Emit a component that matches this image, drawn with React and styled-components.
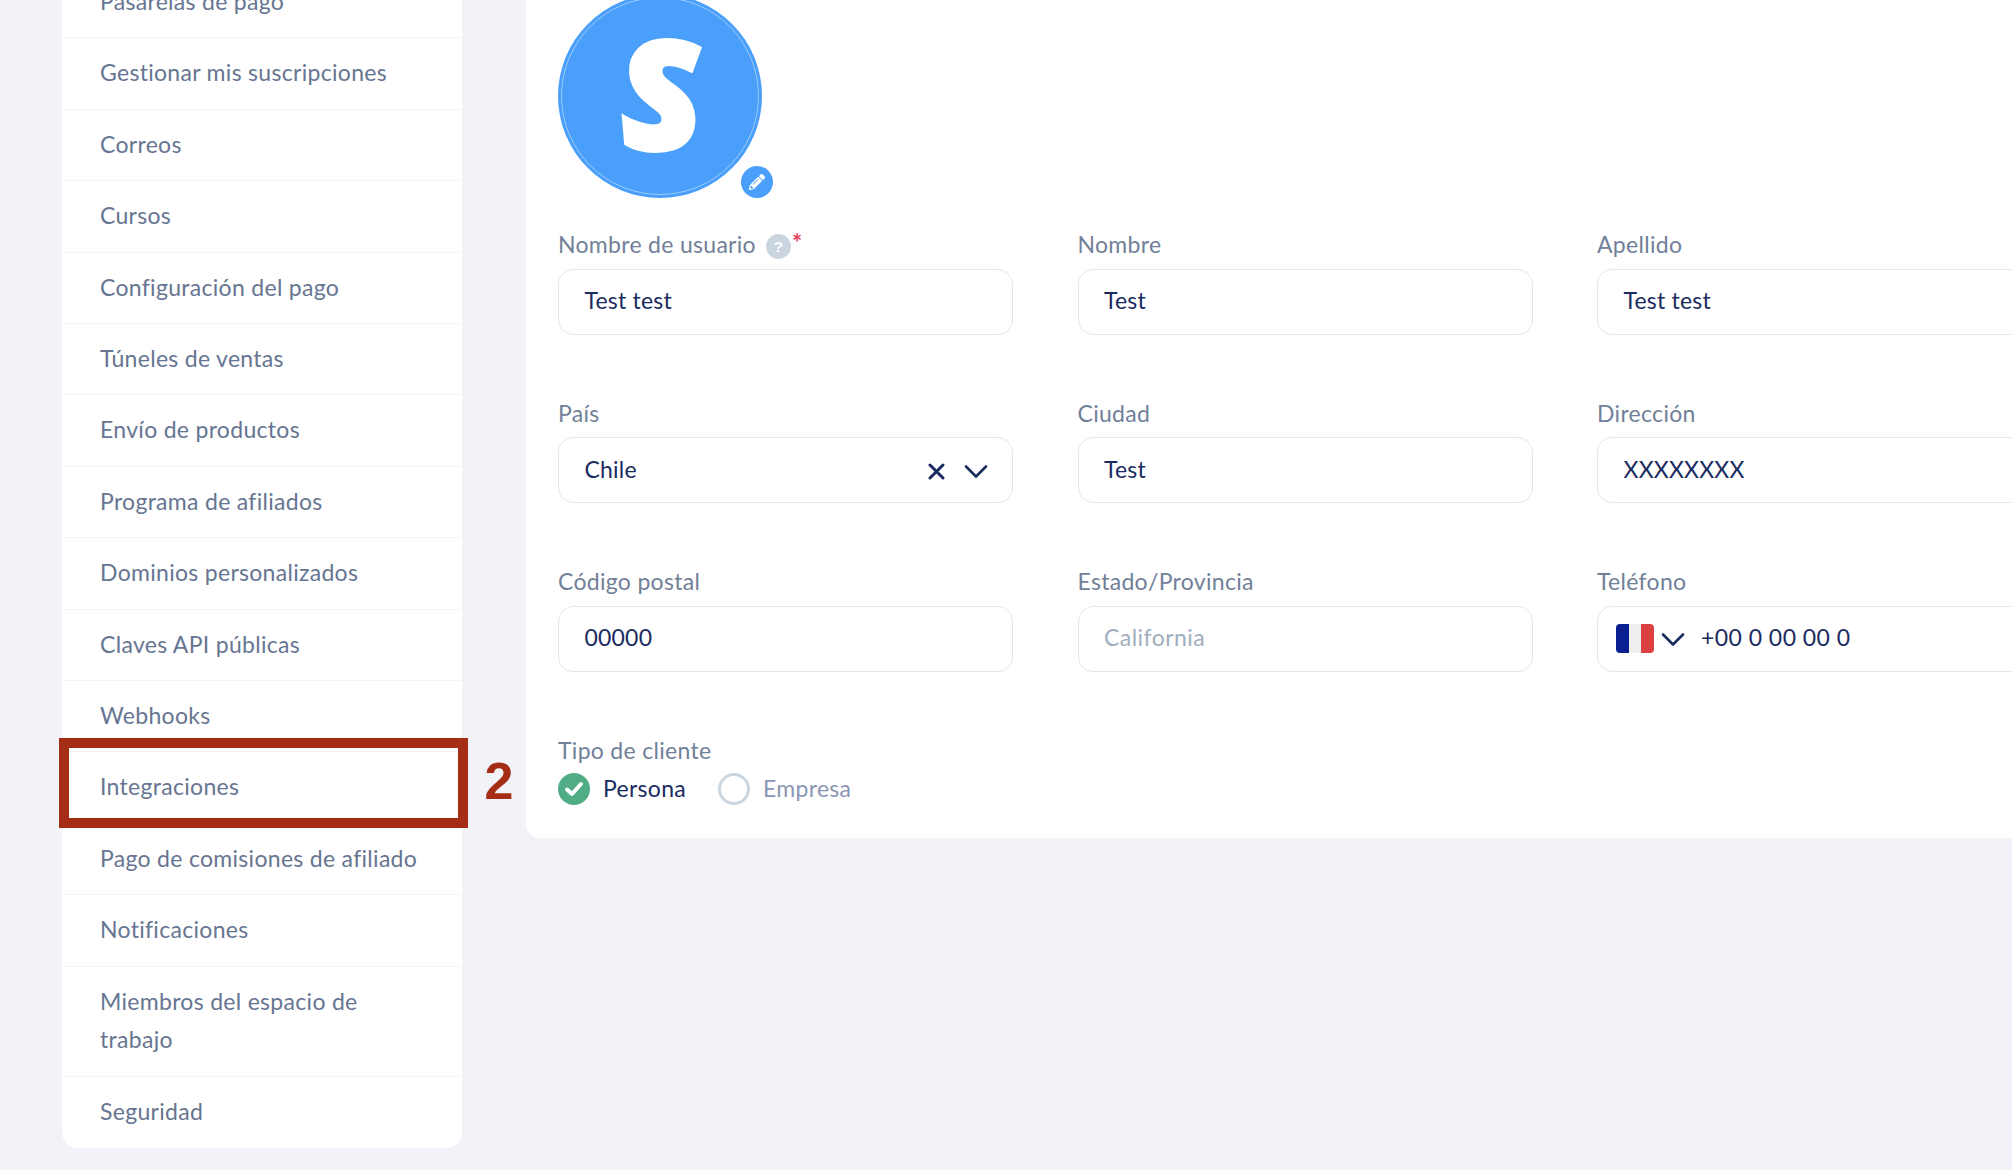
import React from "react";
import styled, { createGlobalStyle } from "styled-components";
import { FaPencilAlt } from "react-icons/fa";

const Global = createGlobalStyle`
  html, body { margin: 0; padding: 0; background: #f1f3f8; }
  * { box-sizing: border-box; }
`;

const Page = styled.div`
  width: 2012px;
  height: 1170px;
  overflow: hidden;
  display: flex;
  align-items: flex-start;
  gap: 64px;
  padding-left: 62px;
  background: #f1f3f8;
  font-family: "Lato", "Noto Sans", sans-serif;
  font-size: 23px;
`;

const Sidebar = styled.nav`
  flex: none;
  width: 400px;
  margin-top: -33px;
  padding-left: 3px;
  background: #fff;
  border-radius: 0 0 16px 16px;
`;

const MenuRow = styled.div`
  position: relative;
  padding: 15px 32px 17px 35px;
  line-height: 38.4px;
  letter-spacing: 0.3px;
  color: #667591;
  border-bottom: 1px solid ${(p) => (p.$last ? "transparent" : "#f3f4f7")};
`;

const Highlight = styled.div`
  position: absolute;
  left: -6px;
  right: -6px;
  top: -14px;
  height: 90px;
  border: 10px solid #a52c15;
  pointer-events: none;
`;

const StepNumber = styled.span`
  position: absolute;
  left: 419.5px;
  top: -1px;
  font: bold 52px/60px "Liberation Sans", Arial, sans-serif;
  color: #a52c15;
  letter-spacing: 0;
`;

const Card = styled.main`
  flex: none;
  width: 1600px;
  margin-top: -40px;
  padding: 34px 32px 33px;
  background: #fff;
  border-radius: 0 0 0 14px;
`;

const AvatarWrap = styled.div`
  position: relative;
  width: 204px;
  height: 204px;
  margin-bottom: 27px;
`;

const Avatar = styled.div`
  width: 204px;
  height: 204px;
  border-radius: 50%;
  background: #4a9ffb;
  display: flex;
  align-items: center;
  justify-content: center;
  position: relative;
  overflow: hidden;
  &::after {
    content: "";
    position: absolute;
    inset: 3px;
    border-radius: 50%;
    border: 1px solid rgba(255, 255, 255, 0.45);
  }
`;

const AvatarLetter = styled.span`
  display: inline-block;
  font-family: "Open Sans", sans-serif;
  font-style: italic;
  font-weight: 800;
  font-size: 150px;
  line-height: 1;
  color: #fff;
  margin-top: -10px;
  transform: skewX(5deg);
  -webkit-text-stroke: 5px #fff;
`;

const EditBadge = styled.div`
  position: absolute;
  left: 183px;
  top: 172px;
  width: 32px;
  height: 32px;
  border-radius: 50%;
  background: #4a9ffb;
  color: #fff;
  display: flex;
  align-items: center;
  justify-content: center;
  font-size: 16px;
`;

const FormGrid = styled.div`
  display: grid;
  grid-template-columns: repeat(3, 455px);
  column-gap: 64.5px;
  row-gap: 58.5px;
`;

const Field = styled.div`
  display: flex;
  flex-direction: column;
`;

const Label = styled.label`
  display: flex;
  align-items: center;
  height: 38.4px;
  margin-bottom: 5.6px;
  letter-spacing: 0.3px;
  color: #718099;
`;

const HelpDot = styled.span`
  width: 25px;
  height: 25px;
  margin-left: 10px;
  margin-top: 4px;
  border-radius: 50%;
  background: #cbd5e0;
  color: #fff;
  font: bold 15px/25px "Liberation Sans", sans-serif;
  text-align: center;
`;

const Required = styled.span`
  margin: -2px 0 0 1px;
  color: #e53e5e;
  font-size: 24px;
  line-height: 1;
  font-weight: 700;
`;

const InputBox = styled.div`
  height: 66px;
  padding: 0 24px 3px 25.5px;
  display: flex;
  align-items: center;
  border: 1.5px solid #e4e7ec;
  border-radius: 15px;
  background: #fff;
  letter-spacing: ${(p) => (p.$placeholder ? "0.45px" : "0.2px")};
  color: ${(p) => (p.$placeholder ? "#a0aec0" : "#1a2b5f")};
`;

const Grow = styled.span`
  flex: 1;
`;

const IconSvg = styled.svg`
  flex: none;
  display: block;
  fill: none;
  stroke: #1a2b5f;
  stroke-linecap: round;
  stroke-linejoin: round;
  margin-top: 5px;
`;

const Flag = styled.span`
  flex: none;
  display: flex;
  width: 38px;
  height: 29px;
  margin: 3px 7px 0 -7.5px;
  border-radius: 4px;
  overflow: hidden;
`;

const FlagBand = styled.span`
  flex: 1;
  background: ${(p) => p.$c};
`;

const PhoneText = styled.span`
  margin-left: 16px;
  letter-spacing: 0.45px;
`;

const ClientType = styled.div`
  margin-top: 58.5px;
`;

const ClientLabel = styled(Label)`
  margin-bottom: 4.4px;
`;

const RadioRow = styled.div`
  display: flex;
  align-items: center;
  height: 32px;
`;

const RadioOff = styled.span`
  flex: none;
  width: 32px;
  height: 32px;
  border-radius: 50%;
  border: 3px solid #cbd5e0;
`;

const RadioOn = styled.span`
  flex: none;
  width: 32px;
  height: 32px;
  border-radius: 50%;
  background: #4fac85;
  display: flex;
  align-items: center;
  justify-content: center;
`;

const RadioText = styled.span`
  margin: -2px 32px 0 13px;
  letter-spacing: 0.3px;
  color: ${(p) => (p.$muted ? "#8a96b4" : "#1a2b5f")};
`;

const Spacer = styled.span`
  flex: none;
  width: 19px;
`;

const menu = [
  "Pasarelas de pago",
  "Gestionar mis suscripciones",
  "Correos",
  "Cursos",
  "Configuración del pago",
  "Túneles de ventas",
  "Envío de productos",
  "Programa de afiliados",
  "Dominios personalizados",
  "Claves API públicas",
  "Webhooks",
  "Integraciones",
  "Pago de comisiones de afiliado",
  "Notificaciones",
  "Miembros del espacio de trabajo",
  "Seguridad",
];

const Chevron = () => (
  <IconSvg width="24" height="15" viewBox="0 0 24 15" strokeWidth="2.6">
    <path d="M2 2.5 12 12.5 22 2.5" />
  </IconSvg>
);

const Cross = () => (
  <IconSvg width="17" height="17" viewBox="0 0 17 17" strokeWidth="3">
    <path d="M2 2 15 15M15 2 2 15" />
  </IconSvg>
);

const Text = ({ label, value, placeholder }) => (
  <Field>
    <Label>{label}</Label>
    <InputBox $placeholder={placeholder}>{value}</InputBox>
  </Field>
);

export default function App() {
  return (
    <Page>
      <Global />
      <Sidebar>
        {menu.map((m, i) => (
          <MenuRow key={m} $last={i === menu.length - 1}>
            {m}
            {m === "Integraciones" && (
              <>
                <Highlight />
                <StepNumber>2</StepNumber>
              </>
            )}
          </MenuRow>
        ))}
      </Sidebar>
      <Card>
        <AvatarWrap>
          <Avatar>
            <AvatarLetter>S</AvatarLetter>
          </Avatar>
          <EditBadge>
            <FaPencilAlt />
          </EditBadge>
        </AvatarWrap>
        <FormGrid>
          <Field>
            <Label>
              Nombre de usuario<HelpDot>?</HelpDot>
              <Required>*</Required>
            </Label>
            <InputBox>Test test</InputBox>
          </Field>
          <Text label="Nombre" value="Test" />
          <Text label="Apellido" value="Test test" />
          <Field>
            <Label>País</Label>
            <InputBox>
              <Grow>Chile</Grow>
              <Cross />
              <Spacer />
              <Chevron />
            </InputBox>
          </Field>
          <Text label="Ciudad" value="Test" />
          <Text label="Dirección" value="XXXXXXXX" />
          <Text label="Código postal" value="00000" />
          <Text label="Estado/Provincia" value="California" placeholder />
          <Field>
            <Label>Teléfono</Label>
            <InputBox>
              <Flag>
                <FlagBand $c="#0a2090" />
                <FlagBand $c="#eeeeee" />
                <FlagBand $c="#dd4040" />
              </Flag>
              <Chevron />
              <PhoneText>+00 0 00 00 0</PhoneText>
            </InputBox>
          </Field>
        </FormGrid>
        <ClientType>
          <ClientLabel>Tipo de cliente</ClientLabel>
          <RadioRow>
            <RadioOn>
              <svg width="20" height="16" viewBox="0 0 20 16" fill="none" stroke="#fff" strokeWidth="4" strokeLinecap="round" strokeLinejoin="round">
                <path d="M3 8.5 8 13 17 3" />
              </svg>
            </RadioOn>
            <RadioText>Persona</RadioText>
            <RadioOff />
            <RadioText $muted>Empresa</RadioText>
          </RadioRow>
        </ClientType>
      </Card>
    </Page>
  );
}
